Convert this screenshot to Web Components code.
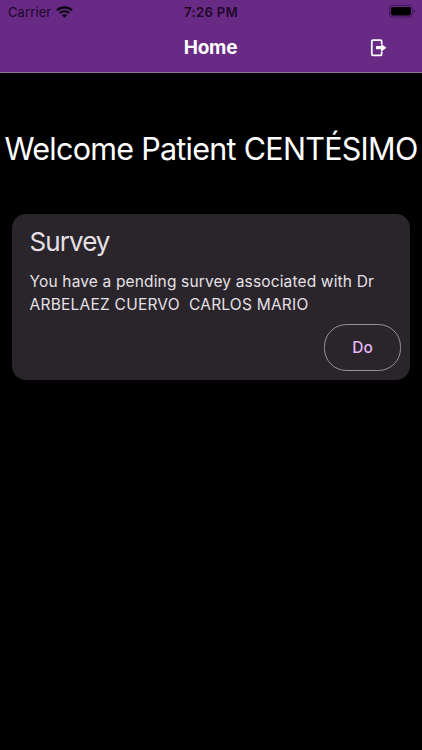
<!DOCTYPE html>
<html lang="en">
<head>
<meta charset="utf-8">
<title>Home</title>
<style>
    body {
        margin: 0;
        background: #000;
        font-family: Inter, "Liberation Sans", sans-serif;
    }

    .doctor {
        letter-spacing: 0.22px;
    }
</style>
</head>
<body>
<patient-home>
    <status-bar slot="header" carrier="Carrier" time="7:26 PM"></status-bar>
    <nav-header slot="header">Home</nav-header>
    <welcome-title>Welcome Patient CENTÉSIMO</welcome-title>
    <survey-card>
        <span slot="title">Survey</span>
        <span>You have a pending survey associated with Dr</span><br>
        <span class="doctor">ARBELAEZ CUERVO&nbsp; CARLOS MARIO</span>
        <outline-button slot="action">Do</outline-button>
    </survey-card>
</patient-home>

<script>
class PatientHome extends HTMLElement {
    constructor() {
        super();
        const shadowRoot = this.attachShadow({ mode: 'open' });
        shadowRoot.innerHTML = `
            <style>
                :host {
                    display: flex;
                    flex-direction: column;
                    height: 750px;
                    overflow: hidden;
                    background: #000;
                }

                header {
                    background: #692a85;
                    border-bottom: 1px solid #8d7598;
                }

                main {
                    display: flex;
                    flex-direction: column;
                    padding: 56px 11.6px 0;
                }
            </style>
            <header><slot name="header"></slot></header>
            <main><slot></slot></main>
        `;
    }
}

class StatusBar extends HTMLElement {
    constructor() {
        super();
        const shadowRoot = this.attachShadow({ mode: 'open' });
        shadowRoot.innerHTML = `
            <style>
                :host {
                    display: grid;
                    grid-template-columns: 1fr auto 1fr;
                    align-items: center;
                    height: 23px;
                    padding: 0 6px 0 8px;
                    color: #1d0728;
                    font-size: 13px;
                    line-height: 16px;
                }

                .left {
                    display: flex;
                    align-items: center;
                    gap: 5px;
                }

                .carrier {
                    letter-spacing: 0.1px;
                }

                .time {
                    margin-right: 2px;
                    font-weight: 600;
                    letter-spacing: 0.4px;
                }

                .battery {
                    justify-self: end;
                }

                svg {
                    display: block;
                }
            </style>
            <div class="left">
                <span class="carrier">${this.getAttribute('carrier')}</span>
                <svg width="17" height="12" viewBox="0 0 17 12" fill="none" stroke="#08010c" stroke-width="2.1">
                    <path d="M1 4.3C5.2 0.4 11.8 0.4 16 4.3"/>
                    <path d="M3.7 7.1C6.4 4.6 10.6 4.6 13.3 7.1"/>
                    <path d="M5.9 9.2C7.4 7.8 9.6 7.8 11.1 9.2L8.5 11.8Z" fill="#08010c" stroke="none"/>
                </svg>
            </div>
            <span class="time">${this.getAttribute('time')}</span>
            <svg class="battery" width="27" height="13" viewBox="0 0 27 13">
                <rect x="0.5" y="0.5" width="23" height="11.5" rx="3.2" fill="none" stroke="#41155a"/>
                <rect x="2" y="2" width="20" height="8.5" rx="1.8" fill="#000"/>
                <path d="M25 4.4c1.6.6 1.6 3.1 0 3.7z" fill="#41155a"/>
            </svg>
        `;
    }
}

class NavHeader extends HTMLElement {
    constructor() {
        super();
        const shadowRoot = this.attachShadow({ mode: 'open' });
        shadowRoot.innerHTML = `
            <style>
                :host {
                    display: grid;
                    grid-template-columns: 1fr auto 1fr;
                    align-items: center;
                    height: 49px;
                    padding: 0 34px;
                    color: #fff;
                }

                h1 {
                    grid-column: 2;
                    margin: 0 1px 0 0;
                    font-size: 19px;
                    line-height: 24px;
                    font-weight: 700;
                    letter-spacing: -0.25px;
                }

                svg {
                    display: block;
                    justify-self: end;
                }
            </style>
            <h1><slot></slot></h1>
            <svg width="18" height="18" viewBox="0 0 18 18">
                <path d="M11.7 5V2.6C11.7 1.7 11.3 1.2 10.5 1.2H3C2.2 1.2 1.8 1.7 1.8 2.6V14.9C1.8 15.8 2.2 16.3 3 16.3H10.5C11.3 16.3 11.7 15.8 11.7 14.9V12.5" fill="none" stroke="#fff" stroke-width="1.7"/>
                <path d="M6.1 7.1H11.1V4.7L16.5 8.7L11.1 12.7V10.3H6.1Z" fill="#fff"/>
            </svg>
        `;
    }
}

class WelcomeTitle extends HTMLElement {
    constructor() {
        super();
        const shadowRoot = this.attachShadow({ mode: 'open' });
        shadowRoot.innerHTML = `
            <style>
                :host {
                    display: block;
                    margin: 0 -11.6px 46px;
                }

                h2 {
                    margin: 0;
                    color: #fff;
                    font-size: 30.5px;
                    line-height: 39px;
                    font-weight: 400;
                    letter-spacing: -0.72px;
                    text-align: center;
                    white-space: nowrap;
                }
            </style>
            <h2><slot></slot></h2>
        `;
    }
}

class SurveyCard extends HTMLElement {
    constructor() {
        super();
        const shadowRoot = this.attachShadow({ mode: 'open' });
        shadowRoot.innerHTML = `
            <style>
                :host {
                    display: flex;
                    flex-direction: column;
                    box-sizing: border-box;
                    height: 166px;
                    padding: 11px 9px 9px 18px;
                    border-radius: 14px;
                    background: #29252b;
                    color: #e6e0e6;
                }

                h3 {
                    margin: 0 0 12px;
                    font-size: 26px;
                    line-height: 34px;
                    font-weight: 400;
                    letter-spacing: -0.95px;
                }

                p {
                    margin: 0;
                    font-size: 15.5px;
                    line-height: 22.5px;
                    letter-spacing: 0.15px;
                    white-space: nowrap;
                }

                .actions {
                    display: flex;
                    justify-content: flex-end;
                    margin-top: auto;
                }
            </style>
            <h3><slot name="title"></slot></h3>
            <p><slot></slot></p>
            <div class="actions"><slot name="action"></slot></div>
        `;
    }
}

class OutlineButton extends HTMLElement {
    constructor() {
        super();
        const shadowRoot = this.attachShadow({ mode: 'open' });
        shadowRoot.innerHTML = `
            <style>
                :host {
                    display: block;
                }

                button {
                    display: block;
                    box-sizing: border-box;
                    width: 77.5px;
                    height: 47px;
                    padding: 0;
                    border: 1px solid #979098;
                    border-radius: 22.5px;
                    background: none;
                    color: #e6b5f5;
                    font: 500 15.5px/22px Inter, "Liberation Sans", sans-serif;
                    letter-spacing: 0.2px;
                }
            </style>
            <button type="button"><slot></slot></button>
        `;
    }
}

customElements.define('patient-home', PatientHome);
customElements.define('status-bar', StatusBar);
customElements.define('nav-header', NavHeader);
customElements.define('welcome-title', WelcomeTitle);
customElements.define('survey-card', SurveyCard);
customElements.define('outline-button', OutlineButton);
</script>
</body>
</html>
